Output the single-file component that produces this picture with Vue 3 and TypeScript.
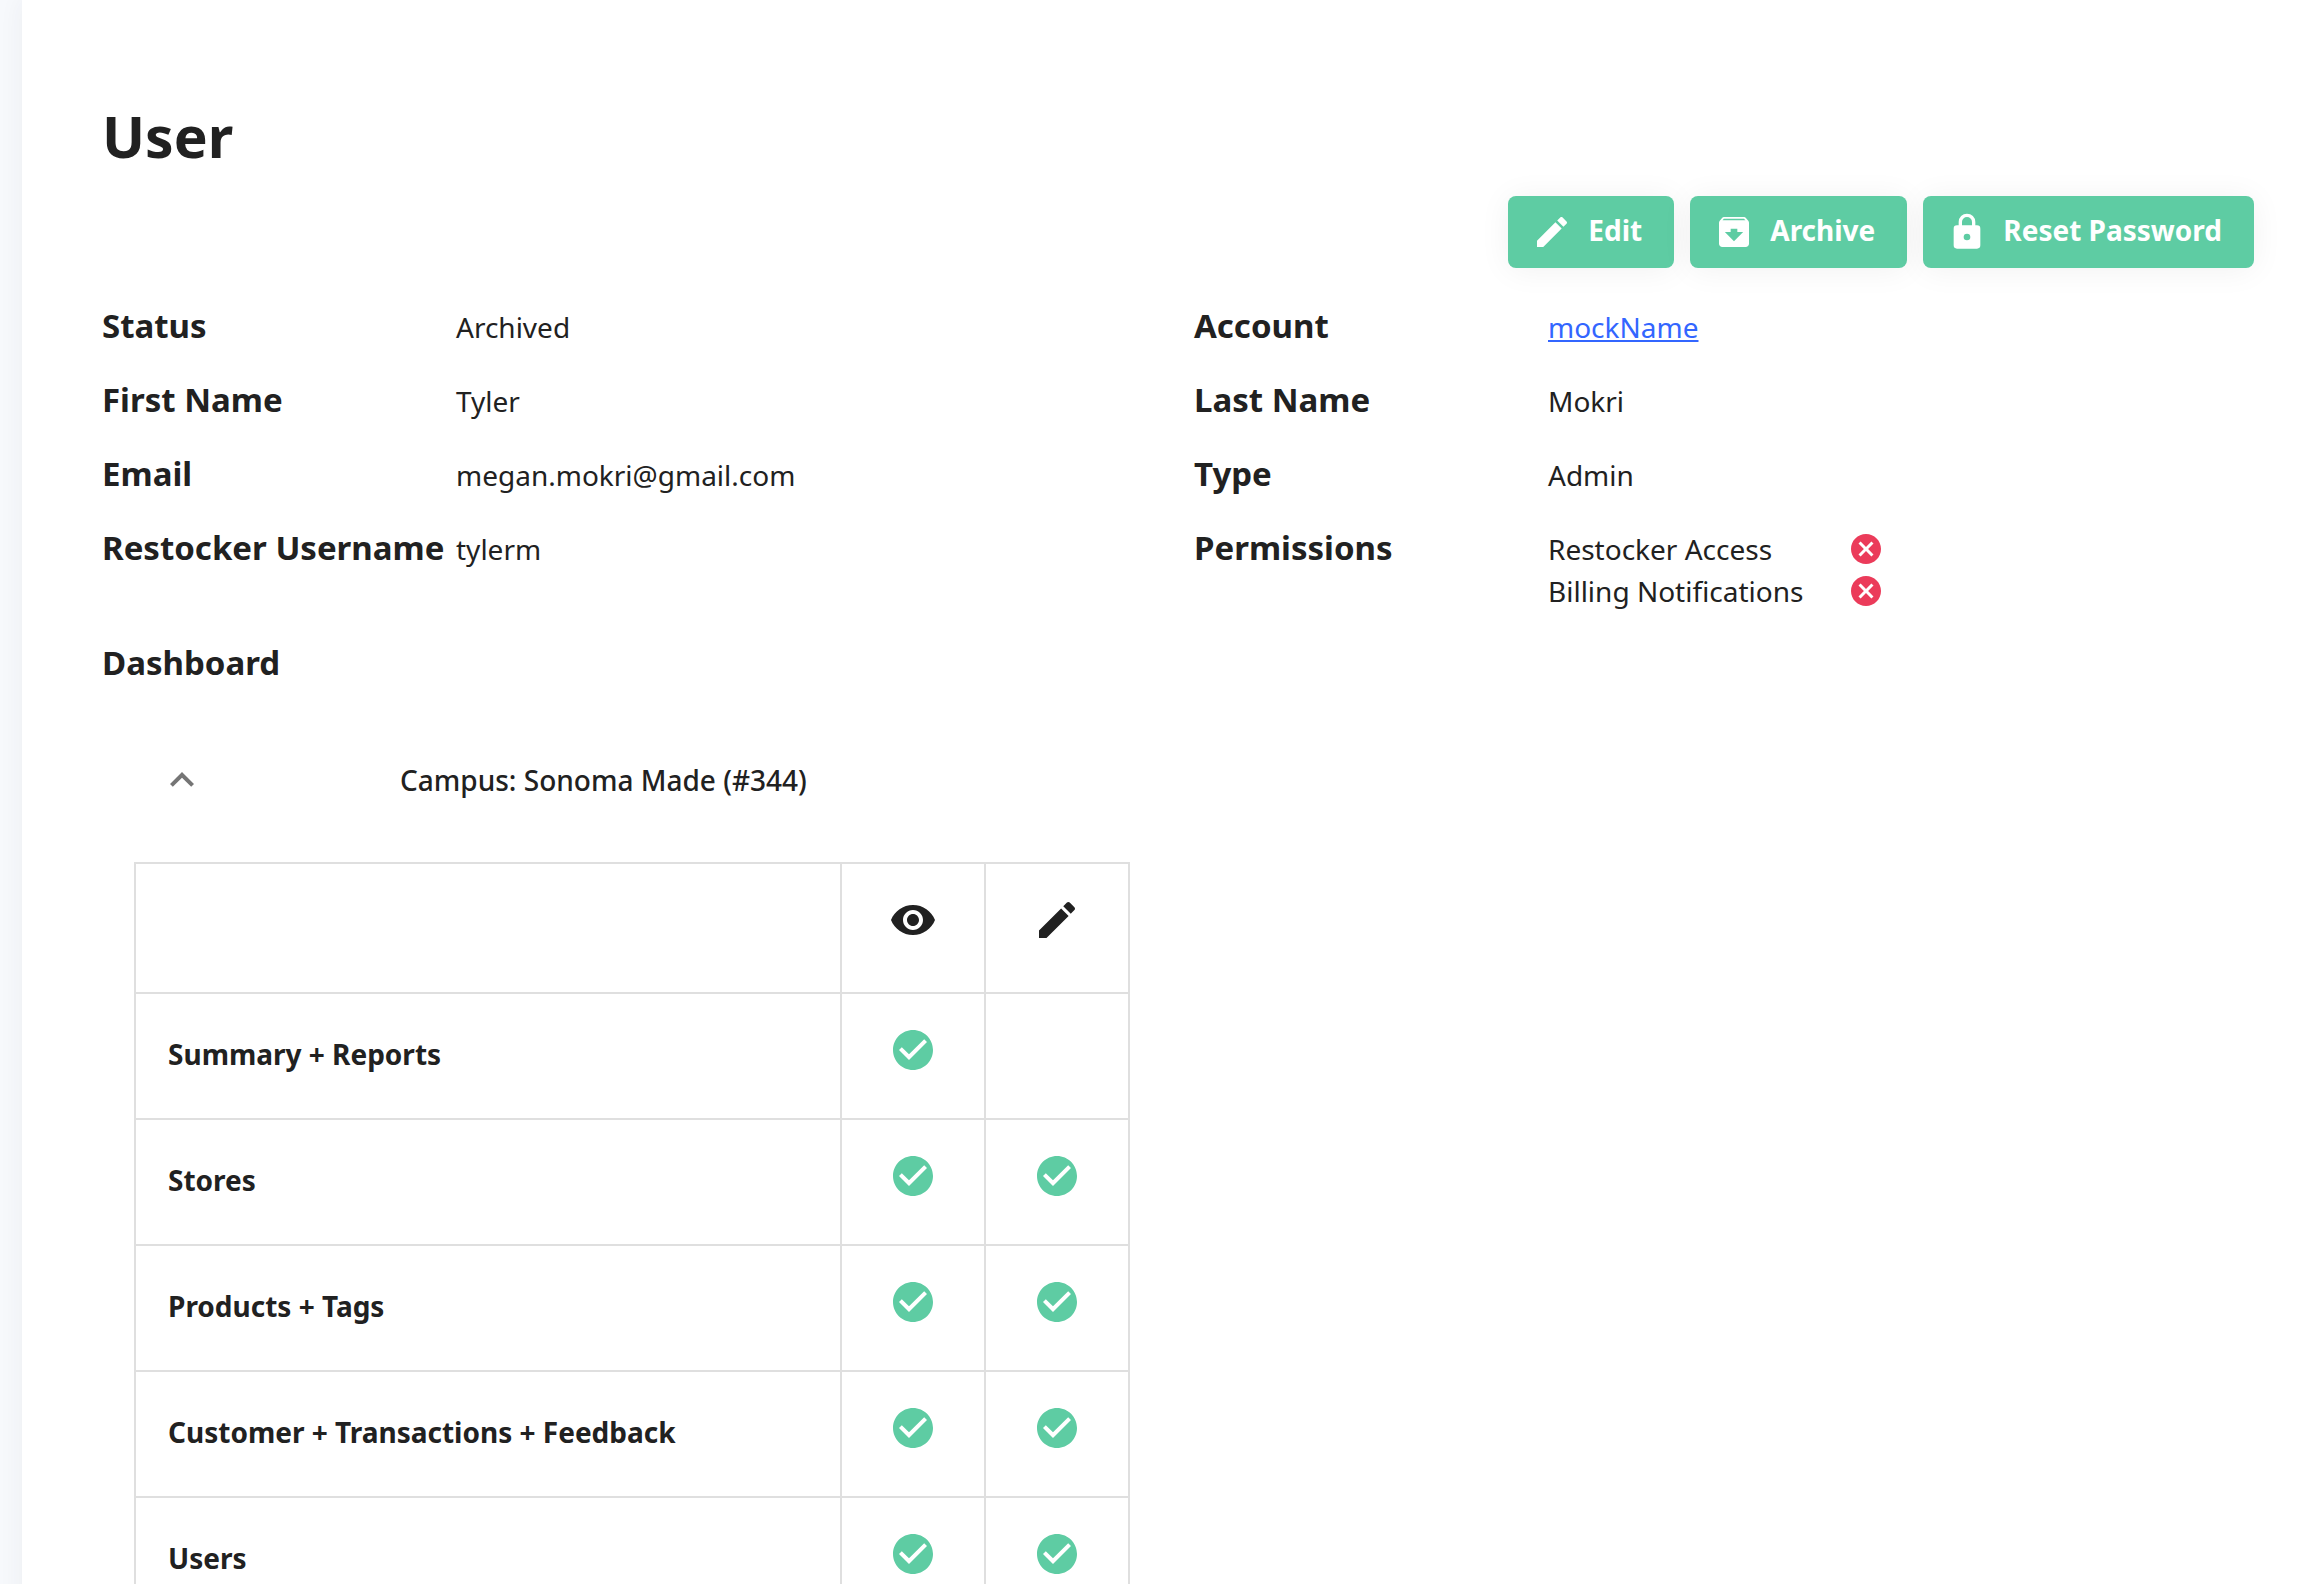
<script setup lang="ts">
import { ref } from 'vue'

interface Action {
  label: string
  icon: string
}

interface Field {
  label: string
  value: string
}

interface PermissionRow {
  name: string
  view: boolean
  edit: boolean
}

const icons = {
  edit: 'M3 17.25V21h3.75L17.81 9.94l-3.75-3.75L3 17.25zM20.71 7.04c.39-.39.39-1.02 0-1.41l-2.34-2.34c-.39-.39-1.02-.39-1.41 0l-1.83 1.83 3.75 3.75 1.83-1.83z',
  archive:
    'M20.54 5.23l-1.39-1.68C18.88 3.21 18.47 3 18 3H6c-.47 0-.88.21-1.16.55L3.46 5.23C3.17 5.57 3 6.02 3 6.5V19c0 1.1.9 2 2 2h14c1.1 0 2-.9 2-2V6.5c0-.48-.17-.93-.46-1.27zM12 17.5L6.5 12H10v-2h4v2h3.5L12 17.5zM5.12 5l.81-1h12l.94 1H5.12z',
  lock: 'M12 17a2 2 0 0 0 2-2 2 2 0 0 0-4 0 2 2 0 0 0 2 2m6-9a2 2 0 0 1 2 2v10a2 2 0 0 1-2 2H6a2 2 0 0 1-2-2V10a2 2 0 0 1 2-2h1V6a5 5 0 0 1 10 0v2h1m-6-5a3 3 0 0 0-3 3v2h6V6a3 3 0 0 0-3-3z',
  eye: 'M12 4.5C7 4.5 2.73 7.61 1 12c1.73 4.39 6 7.5 11 7.5s9.27-3.11 11-7.5c-1.73-4.39-6-7.5-11-7.5zM12 17c-2.76 0-5-2.24-5-5s2.24-5 5-5 5 2.24 5 5-2.24 5-5 5zm0-8c-1.66 0-3 1.34-3 3s1.34 3 3 3 3-1.34 3-3-1.34-3-3-3z',
  check:
    'M12 2C6.48 2 2 6.48 2 12s4.48 10 10 10 10-4.48 10-10S17.52 2 12 2zm-2 15l-5-5 1.41-1.41L10 14.17l7.59-7.59L19 8l-9 9z',
  cancel:
    'M12 2C6.47 2 2 6.47 2 12s4.47 10 10 10 10-4.47 10-10S17.53 2 12 2zm5 13.59L15.59 17 12 13.41 8.41 17 7 15.59 10.59 12 7 8.41 8.41 7 12 10.59 15.59 7 17 8.41 13.41 12 17 15.59z',
  chevron: 'M12 8l-6 6 1.41 1.41L12 10.83l4.59 4.58L18 14z',
}

const actions: Action[] = [
  { label: 'Edit', icon: icons.edit },
  { label: 'Archive', icon: icons.archive },
  { label: 'Reset Password', icon: icons.lock },
]

const personal: Field[] = [
  { label: 'Status', value: 'Archived' },
  { label: 'First Name', value: 'Tyler' },
  { label: 'Email', value: 'megan.mokri@gmail.com' },
  { label: 'Restocker Username', value: 'tylerm' },
]

const permissions = ['Restocker Access', 'Billing Notifications']

const rows: PermissionRow[] = [
  { name: 'Summary + Reports', view: true, edit: false },
  { name: 'Stores', view: true, edit: true },
  { name: 'Products + Tags', view: true, edit: true },
  { name: 'Customer + Transactions + Feedback', view: true, edit: true },
  { name: 'Users', view: true, edit: true },
]

const open = ref(true)
</script>

<template>
  <div class="page">
    <main class="panel">
      <h1 class="title">User</h1>

      <div class="actions">
        <button v-for="action in actions" :key="action.label" type="button" class="action">
          <svg class="icon-md" viewBox="0 0 24 24" aria-hidden="true"><path :d="action.icon" /></svg>
          <span>{{ action.label }}</span>
        </button>
      </div>

      <div class="details">
        <dl class="fields">
          <div v-for="field in personal" :key="field.label" class="field">
            <dt>{{ field.label }}</dt>
            <dd>{{ field.value }}</dd>
          </div>
        </dl>
        <dl class="fields">
          <div class="field">
            <dt>Account</dt>
            <dd><a href="#account">mockName</a></dd>
          </div>
          <div class="field">
            <dt>Last Name</dt>
            <dd>Mokri</dd>
          </div>
          <div class="field">
            <dt>Type</dt>
            <dd>Admin</dd>
          </div>
          <div class="field">
            <dt>Permissions</dt>
            <dd>
              <ul class="permissions">
                <li v-for="name in permissions" :key="name">
                  <span>{{ name }}</span>
                  <svg class="icon-sm denied" viewBox="0 0 24 24" role="img" aria-label="No">
                    <path :d="icons.cancel" />
                  </svg>
                </li>
              </ul>
            </dd>
          </div>
        </dl>
      </div>

      <h2 class="section">Dashboard</h2>

      <section class="accordion">
        <button type="button" class="summary" :aria-expanded="open" @click="open = !open">
          <svg class="icon-lg chevron" :class="{ closed: !open }" viewBox="0 0 24 24" aria-hidden="true">
            <path :d="icons.chevron" />
          </svg>
          <span>Campus: Sonoma Made (#344)</span>
        </button>

        <table v-if="open" class="grid">
          <colgroup>
            <col />
            <col class="mark" />
            <col class="mark" />
          </colgroup>
          <thead>
            <tr>
              <td></td>
              <th scope="col">
                <svg class="icon-lg" viewBox="0 0 24 24" role="img" aria-label="View"><path :d="icons.eye" /></svg>
              </th>
              <th scope="col">
                <svg class="icon-lg" viewBox="0 0 24 24" role="img" aria-label="Edit"><path :d="icons.edit" /></svg>
              </th>
            </tr>
          </thead>
          <tbody>
            <tr v-for="row in rows" :key="row.name">
              <th scope="row">{{ row.name }}</th>
              <td>
                <svg v-if="row.view" class="icon-lg allowed" viewBox="0 0 24 24" role="img" aria-label="Yes">
                  <path :d="icons.check" />
                </svg>
              </td>
              <td>
                <svg v-if="row.edit" class="icon-lg allowed" viewBox="0 0 24 24" role="img" aria-label="Yes">
                  <path :d="icons.check" />
                </svg>
              </td>
            </tr>
          </tbody>
        </table>
      </section>
    </main>
  </div>
</template>

<style>
html,
body {
  height: 100%;
  overflow: hidden;
}
</style>

<style scoped>
.page {
  height: 100vh;
  overflow: hidden;
  padding-left: 22px;
  background: #f7f9fc;
  color: #212121;
  font: 400 28px/42px 'Noto Sans', sans-serif;
}

.panel {
  box-sizing: border-box;
  min-height: 100%;
  padding: 104px 16px 0 80px;
  background: #fff;
  box-shadow: 0 0 24px rgba(44, 51, 73, 0.06);
}

svg {
  display: block;
  flex: none;
  fill: currentColor;
}

.icon-sm {
  width: 36px;
  height: 36px;
}

.icon-md {
  width: 40px;
  height: 40px;
}

.icon-lg {
  width: 48px;
  height: 48px;
}

.title {
  margin: 0;
  font-size: 57px;
  font-weight: 700;
  line-height: 64px;
}

.actions {
  display: flex;
  justify-content: flex-end;
  gap: 16px;
  margin: 28px 32px 36px 0;
}

.action {
  display: flex;
  align-items: center;
  gap: 16px;
  height: 72px;
  padding: 0 32px 0 24px;
  border: 0;
  border-radius: 8px;
  background: #5ecca3;
  box-shadow: 0 2px 32px rgba(0, 0, 0, 0.06);
  color: #fff;
  font: 700 28px/40px 'Noto Sans', sans-serif;
  cursor: pointer;
}

.action span {
  padding-bottom: 4px;
}

.details {
  display: grid;
  grid-template-columns: 1fr 1fr;
}

.fields {
  margin: 0;
}

.field {
  display: flex;
  align-items: baseline;
  padding-bottom: 30px;
}

dt {
  flex: none;
  width: 354px;
  font-size: 33px;
  font-weight: 700;
  line-height: 44px;
  white-space: nowrap;
}

dd {
  margin: 0;
}

a {
  color: #3366ff;
  text-decoration: underline;
}

.permissions {
  margin: 0;
  padding: 0;
  list-style: none;
}

.permissions li {
  display: flex;
  align-items: center;
}

.permissions span {
  width: 300px;
}

.denied {
  color: #eb3b5a;
}

.allowed {
  color: #5ecca3;
}

.section {
  margin: 0;
  font-size: 33px;
  font-weight: 700;
  line-height: 42px;
}

.accordion {
  width: calc(50% - 96px);
  margin: 48px 0 0 32px;
}

.summary {
  display: flex;
  align-items: center;
  gap: 194px;
  width: 100%;
  height: 96px;
  padding: 0 24px;
  border: 0;
  background: none;
  color: inherit;
  font: 500 28px/42px 'Noto Sans', sans-serif;
  cursor: pointer;
}

.chevron {
  color: #757575;
}

.chevron.closed {
  transform: rotate(180deg);
}

.grid {
  width: 100%;
  margin-top: 34px;
  border-collapse: collapse;
  table-layout: fixed;
}

.mark {
  width: 144px;
}

.grid th,
.grid td {
  box-sizing: border-box;
  height: 126px;
  padding: 32px 32px 44px;
  border: 2px solid #dfdfdf;
  vertical-align: top;
}

.grid thead th,
.grid thead td {
  height: 130px;
}

.grid td svg,
.grid thead svg {
  margin: 0 auto;
}

.grid tbody th {
  padding: 0 32px 4px;
  font-weight: 700;
  text-align: left;
  vertical-align: middle;
}
</style>
